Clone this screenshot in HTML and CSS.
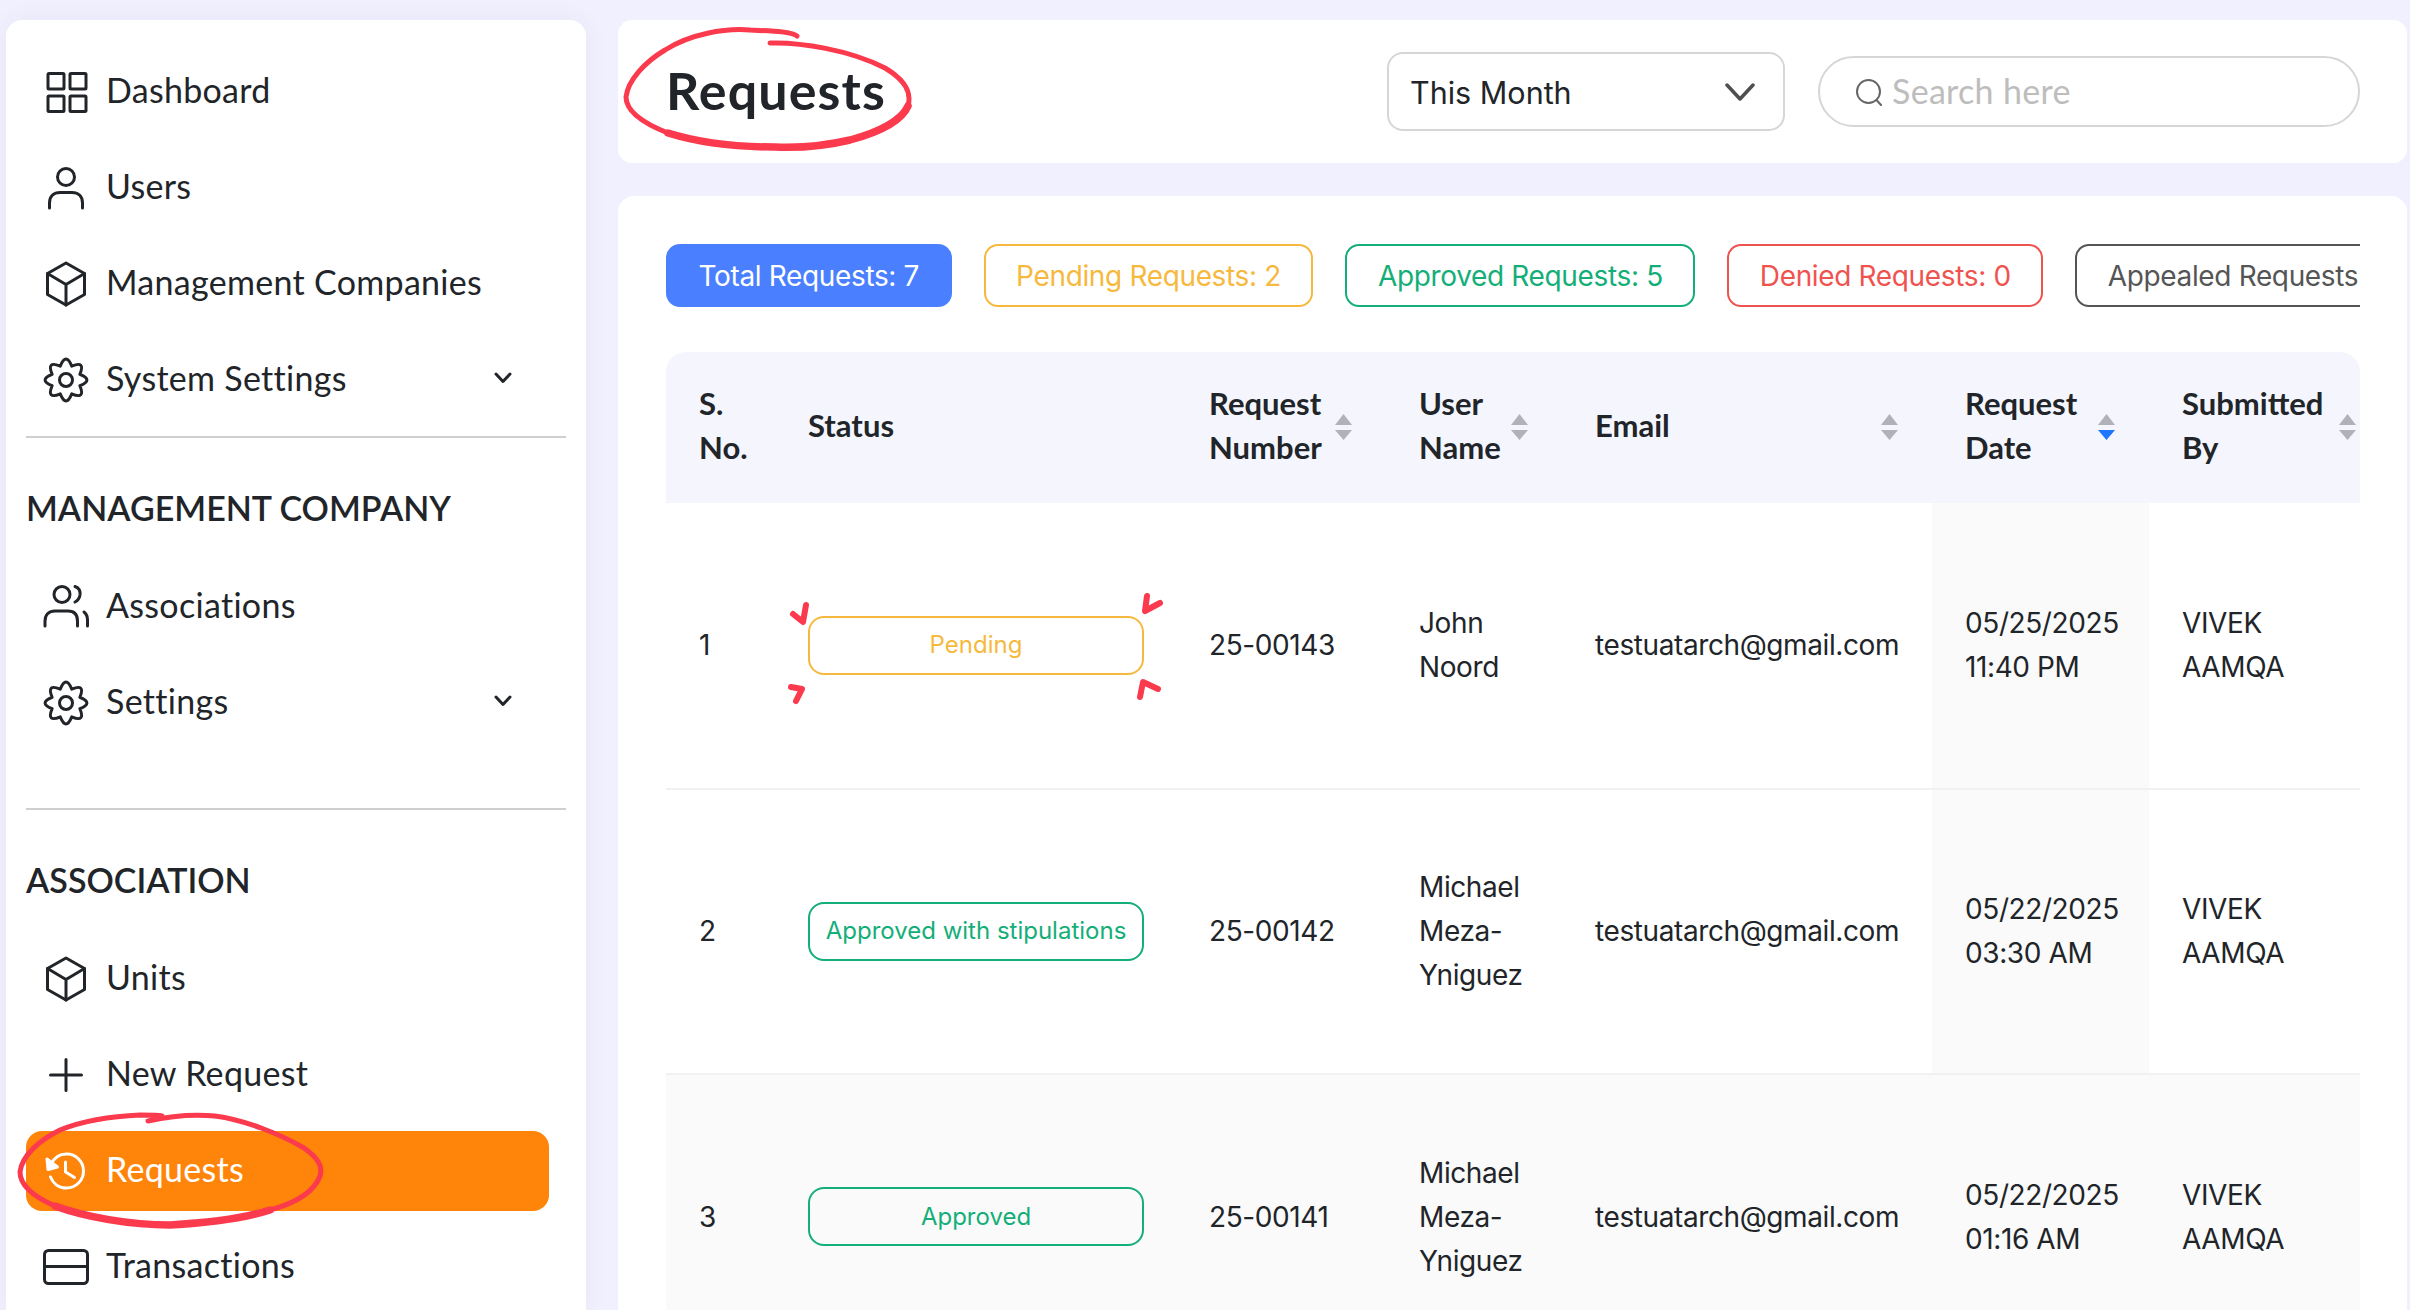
FILE: index.html
```html
<!DOCTYPE html>
<html lang="en">
<head>
<meta charset="utf-8">
<title>Requests</title>
<link rel="stylesheet" href="styles.css">
</head>
<body>
<svg class="defs" width="0" height="0" aria-hidden="true">
  <symbol id="i-gear" viewBox="0 0 46 46"><path d="M36.86 17.26Q51 23 36.86 28.74Q42.8 42.8 28.74 36.86Q23 51 17.26 36.86Q3.2 42.8 9.14 28.74Q-5 23 9.14 17.26Q3.2 3.2 17.26 9.14Q23 -5 28.74 9.14Q42.8 3.2 36.86 17.26Z"/><circle cx="23" cy="23" r="6.5"/></symbol>
  <symbol id="i-cube" viewBox="0 0 46 46"><path d="M23 2L41.5 12.5V33.500L23 44L4.5 33.500V12.5Z"/><path d="M4.5 12.5L23 23.5L41.5 12.5M23 23.5V44"/></symbol>
  <symbol id="i-chev" viewBox="0 0 18 12"><path d="M2 2L9 9.5L16 2"/></symbol>
</svg>

<aside class="sidebar">
  <nav class="group">
    <a class="item"><svg class="ic" viewBox="0 0 46 46"><rect x="5" y="4.500" width="16" height="15.500" rx="1"/><rect x="27" y="4.500" width="16" height="15.500" rx="1"/><rect x="5" y="27" width="16" height="15.500" rx="1"/><rect x="27" y="27" width="16" height="15.500" rx="1"/></svg><span>Dashboard</span></a>
    <a class="item"><svg class="ic" viewBox="0 0 46 46"><circle cx="23" cy="12" r="8.500"/><path d="M6.500 43V38C6.500 31 11 27.500 17 27.500H29C35 27.500 39.500 31 39.500 38V43"/></svg><span>Users</span></a>
    <a class="item"><svg class="ic"><use href="#i-cube"/></svg><span>Management Companies</span></a>
    <a class="item"><svg class="ic"><use href="#i-gear"/></svg><span>System Settings</span><svg class="chev"><use href="#i-chev"/></svg></a>
  </nav>
  <hr class="rule">
  <h2 class="heading">MANAGEMENT COMPANY</h2>
  <nav class="group">
    <a class="item"><svg class="ic" viewBox="0 0 46 46"><circle cx="19" cy="10.500" r="8"/><path d="M32 2.500C36 4 37.500 7.500 37 11C36.500 14 35 16.500 32 18"/><path d="M2 42V37C2 30.500 6 27 12 27H25C31 27 34.500 30.500 34.500 37V42"/><path d="M41 28C43.500 30 44.500 33 44.500 36V42"/></svg><span>Associations</span></a>
    <a class="item"><svg class="ic"><use href="#i-gear"/></svg><span>Settings</span><svg class="chev"><use href="#i-chev"/></svg></a>
  </nav>
  <hr class="rule rule-low">
  <h2 class="heading">ASSOCIATION</h2>
  <nav class="group">
    <a class="item"><svg class="ic"><use href="#i-cube"/></svg><span>Units</span></a>
    <a class="item"><svg class="ic" viewBox="0 0 46 46"><path d="M23 7.500V38.500M7.500 23H38.500"/></svg><span>New Request</span></a>
    <a class="item active"><svg class="ic" viewBox="0 0 46 46"><path d="M8 16.500C11 9.500 17 6 23.500 6C33 6 40.500 13.500 40.500 23C40.500 32.500 33 40 23.500 40C16 40 10 35.500 7.500 29"/><path class="solid" d="M4 11L5 21.500L14.500 19Z"/><path d="M22.500 14V24L31.500 29.500"/></svg><span>Requests</span></a>
    <a class="item"><svg class="ic" viewBox="0 0 46 46"><rect x="1.500" y="6.500" width="43" height="33" rx="4"/><path d="M1.500 22.500H44.500"/></svg><span>Transactions</span></a>
  </nav>
</aside>

<main class="main">
  <header class="topbar">
    <h1 class="title">Requests</h1>
    <div class="select"><span>This Month</span><svg class="select-chev" viewBox="0 0 30 18"><path d="M2 2L15 16L28 2"/></svg></div>
    <div class="search"><svg class="search-ic" viewBox="0 0 28 28"><circle cx="13.500" cy="13.500" r="11.500"/><path d="M21.500 22L26 27"/></svg><span>Search here</span></div>
  </header>

  <section class="card">
    <div class="pills">
      <span class="pill pill-blue">Total Requests: 7</span>
      <span class="pill pill-amber">Pending Requests: 2</span>
      <span class="pill pill-green">Approved Requests: 5</span>
      <span class="pill pill-red">Denied Requests: 0</span>
      <span class="pill pill-grey">Appealed Requests: 0</span>
    </div>

    <div class="table-wrap">
      <table class="table">
        <colgroup>
          <col class="c-no"><col class="c-status"><col class="c-num"><col class="c-user"><col class="c-email"><col class="c-date"><col class="c-by">
        </colgroup>
        <thead>
          <tr>
            <th>S. No.</th>
            <th>Status</th>
            <th><div class="th"><span>Request Number</span><svg class="sort" viewBox="0 0 17 26"><path d="M0 11L8.500 0L17 11Z"/><path d="M0 16H17L8.500 26Z"/></svg></div></th>
            <th><div class="th"><span>User Name</span><svg class="sort" viewBox="0 0 17 26"><path d="M0 11L8.500 0L17 11Z"/><path d="M0 16H17L8.500 26Z"/></svg></div></th>
            <th><div class="th"><span>Email</span><svg class="sort" viewBox="0 0 17 26"><path d="M0 11L8.500 0L17 11Z"/><path d="M0 16H17L8.500 26Z"/></svg></div></th>
            <th><div class="th"><span>Request Date</span><svg class="sort" viewBox="0 0 17 26"><path d="M0 11L8.500 0L17 11Z"/><path class="on" d="M0 16H17L8.500 26Z"/></svg></div></th>
            <th><div class="th"><span>Submitted By</span><svg class="sort" viewBox="0 0 17 26"><path d="M0 11L8.500 0L17 11Z"/><path d="M0 16H17L8.500 26Z"/></svg></div></th>
          </tr>
        </thead>
        <tbody>
          <tr>
            <td>1</td><td><span class="badge badge-amber">Pending</span></td><td>25-00143</td><td>John Noord</td><td>testuatarch@gmail.com</td><td class="sorted">05/25/2025 11:40 PM</td><td>VIVEK AAMQA</td>
          </tr>
          <tr>
            <td>2</td><td><span class="badge badge-green">Approved with stipulations</span></td><td>25-00142</td><td>Michael Meza-Yniguez</td><td>testuatarch@gmail.com</td><td class="sorted">05/22/2025 03:30 AM</td><td>VIVEK AAMQA</td>
          </tr>
          <tr class="odd">
            <td>3</td><td><span class="badge badge-green">Approved</span></td><td>25-00141</td><td>Michael Meza-Yniguez</td><td>testuatarch@gmail.com</td><td class="sorted">05/22/2025 01:16 AM</td><td>VIVEK AAMQA</td>
          </tr>
        </tbody>
      </table>
    </div>
  </section>
</main>

<svg class="marks" viewBox="0 0 2410 1310" aria-hidden="true">
  <path d="M770 43C800 42 850 50 885 68C905 80 912 92 908 106C902 120 880 132 850 140C825 146 800 148 775 147C740 147 700 143 668 133C640 122 626 110 626 97C628 80 645 62 665 50C690 34 725 28 750 30C770 31 790 31 797 36"/>
  <path class="thick" d="M908 106C902 120 880 132 850 140C825 146 800 148 775 147C740 147 700 143 668 133"/>
  <path d="M148 1121C170 1116 195 1114 215 1116C245 1120 280 1134 304 1148C318 1158 323 1166 320 1176C314 1192 296 1203 270 1210C245 1218 205 1223 170 1225C130 1225 85 1217 55 1206C32 1196 20 1184 20 1172C22 1155 40 1140 60 1130C85 1120 115 1116 140 1115C150 1115 158 1115 162 1116"/>
  <path class="thick" d="M270 1210C245 1218 205 1223 170 1225C130 1225 85 1217 55 1206"/>
  <path class="tick" d="M793 614L803 622L806 605"/>
  <path class="tick" d="M1160 603L1145 611L1147 596"/>
  <path class="tick" d="M791 687L802 689L796 701"/>
  <path class="tick" d="M1158 689L1143 682L1140 697"/>
</svg>
</body>
</html>
```
FILE: styles.css
```css
* { box-sizing: border-box; }
html, body { margin: 0; height: 1310px; overflow: hidden; }
body {
  position: relative;
  display: flex;
  align-items: flex-start;
  padding: 20px 3px 0 6px;
  gap: 32px;
  background: #f0f0fe;
  color: #212529;
  font-family: Lato, "Noto Sans", sans-serif;
}
.defs { position: absolute; }

/* Sidebar */
.sidebar {
  flex: none;
  width: 580px;
  height: 1290px;
  padding: 32px 20px 0;
  background: #fff;
  border-radius: 16px 16px 0 0;
  box-shadow: 0 0 24px rgba(60, 60, 140, .06);
  overflow: hidden;
}
.group { display: flex; flex-direction: column; gap: 16px; width: 523px; }
.item {
  display: flex;
  align-items: center;
  height: 80px;
  padding: 0 37px 0 17px;
  gap: 17px;
  border-radius: 16px;
  font-size: 34px;
  letter-spacing: .3px;
  white-space: nowrap;
}
.item span { flex: 1; padding-bottom: 5px; }
.ic {
  flex: none;
  width: 46px;
  height: 46px;
  fill: none;
  stroke: #212529;
  stroke-width: 3;
  stroke-linejoin: round;
  stroke-linecap: round;
}
.chev {
  flex: none;
  width: 18px;
  height: 12px;
  fill: none;
  stroke: #212529;
  stroke-width: 3;
  stroke-linecap: round;
  stroke-linejoin: round;
  margin-bottom: 4px;
}
.item.active { background: #ff840a; color: #fff; }
.item.active .ic { stroke: #fff; }
.item.active .solid { fill: #fff; }
.rule { height: 2px; margin: 16px 0 0; border: 0; background: #cfcfcf; width: 540px; }
.rule-low { margin-top: 65px; }
.heading {
  margin: 50px 0 0;
  height: 40px;
  line-height: 40px;
  font-size: 34px;
  font-weight: 600;
  letter-spacing: 0;
}
.heading + .group { margin-top: 39px; }

/* Main column */
.main { flex: none; width: 1789px; display: flex; flex-direction: column; gap: 33px; }
.topbar {
  display: flex;
  align-items: center;
  height: 143px;
  padding: 0 47px 0 48px;
  background: #fff;
  border-radius: 14px;
}
.title { margin: 0 auto 4px 0; font-size: 52px; font-weight: 700; letter-spacing: 1.1px; }
.select {
  display: flex;
  align-items: center;
  justify-content: space-between;
  width: 398px;
  height: 79px;
  padding: 0 28px 0 21px;
  margin-right: 33px;
  border: 2px solid #d6d6d6;
  border-radius: 16px;
  font-family: Inter, sans-serif;
  font-size: 30.5px;
}
.select span { padding-top: 2px; }
.select-chev { width: 30px; height: 18px; fill: none; stroke: #4f4f4f; stroke-width: 3.500; stroke-linecap: round; stroke-linejoin: round; }
.search {
  display: flex;
  align-items: center;
  gap: 9px;
  width: 542px;
  height: 71px;
  padding: 0 35px;
  border: 2px solid #d6d6d6;
  border-radius: 36px;
  color: #bdbdbd;
  font-size: 34px;
  letter-spacing: .3px;
}
.search span { padding-bottom: 3px; }
.search-ic { width: 28px; height: 28px; fill: none; stroke: #666; stroke-width: 2; stroke-linecap: round; }

.card {
  height: 1200px;
  padding: 48px 47px 0 48px;
  background: #fff;
  border-radius: 16px;
  overflow: hidden;
}
.pills { display: flex; gap: 32px; overflow: hidden; }
.pill {
  flex: none;
  display: flex;
  align-items: center;
  height: 63px;
  padding: 0 30.5px;
  border: 2px solid;
  border-radius: 14px;
  font-family: Inter, sans-serif;
  font-size: 28px;
  letter-spacing: -.35px;
  white-space: nowrap;
}
.pill-blue { background: #4a80ff; border-color: #4a80ff; color: #fff; }
.pill-amber { border-color: #f6b93d; color: #f6b93d; }
.pill-green { border-color: #14ae78; color: #14ae78; }
.pill-red { border-color: #ef5350; color: #ef5350; }
.pill-grey { border-color: #555; color: #555; }

/* Table */
.table-wrap { margin-top: 45px; border-radius: 20px 20px 0 0; overflow: hidden; }
.table {
  width: 1724px;
  table-layout: fixed;
  border-collapse: collapse;
  font-family: Inter, sans-serif;
  font-size: 28px;
  letter-spacing: -.4px;
  line-height: 44px;
}
.c-no { width: 109px; }
.c-status { width: 401px; }
.c-num { width: 210px; }
.c-user { width: 176px; }
.c-email { width: 370px; }
.c-date { width: 217px; }
.c-by { width: 241px; }
.table th {
  height: 151px;
  padding: 0 33px 6px;
  background: #f4f5fd;
  text-align: left;
  font-family: Lato, "Noto Sans", sans-serif;
  font-size: 31px;
  font-weight: 700;
  letter-spacing: 0;
}
.th { display: flex; align-items: center; justify-content: space-between; }
.sort { flex: none; width: 17px; height: 26px; margin: 4px 1px 0 0; fill: #b1b1b8; }
.sort .on { fill: #1f75fe; }
.table td { height: 285.5px; padding: 0 33px; border-bottom: 2px solid #f1f1f1; }
.sorted { background: #fafafa; }
.odd td { background: #fafafa; }
.badge {
  display: flex;
  align-items: center;
  justify-content: center;
  width: 336px;
  height: 59px;
  border: 2px solid;
  border-radius: 16px;
  font-size: 24px;
  letter-spacing: 0;
  white-space: nowrap;
}
.badge-amber { border-color: #f6b93d; color: #f6b93d; }
.badge-green { border-color: #14ae78; color: #14ae78; }

/* Hand-drawn red annotations over the page */
.marks {
  position: absolute;
  left: 0;
  top: 0;
  width: 2410px;
  height: 1310px;
  pointer-events: none;
  fill: none;
  stroke: #fb3a4e;
  stroke-width: 5;
  stroke-linecap: round;
  stroke-linejoin: round;
}
.marks .thick { stroke-width: 7.500; }
.marks .tick { stroke-width: 6; }
```
